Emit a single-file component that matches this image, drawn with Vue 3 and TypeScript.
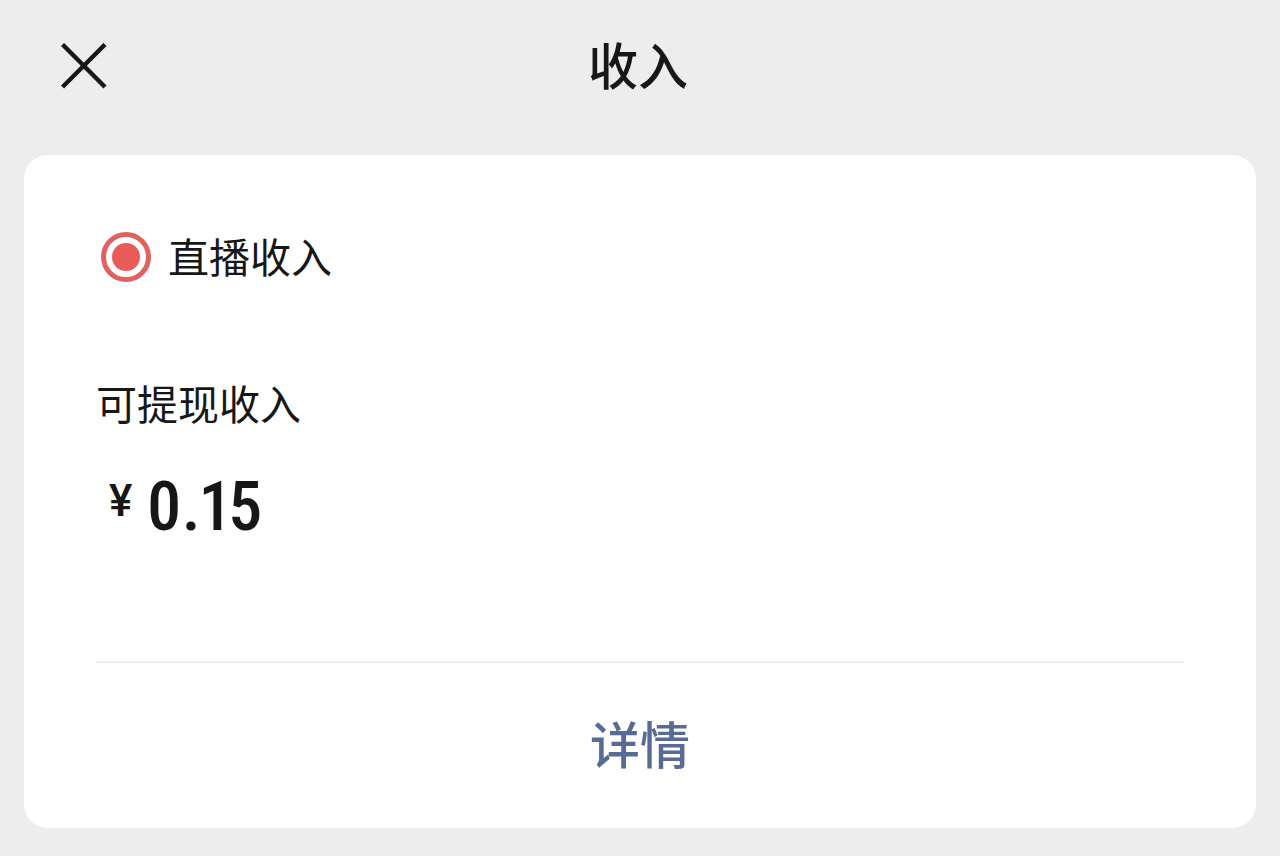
<script setup lang="ts">
const income: string = '0.15'
</script>

<template>
  <div class="page">
    <header class="bar">
      <button class="close" type="button" aria-label="关闭">
        <svg viewBox="0 0 46 46" width="46" height="46" aria-hidden="true">
          <path d="M1.5 1.5 44 44M44 1.5 1.5 44" fill="none" stroke="#171717" stroke-width="4.4" />
        </svg>
      </button>
      <h1 class="title">收入</h1>
    </header>
    <main class="card">
      <h2 class="source">
        <svg viewBox="0 0 50 50" width="50" height="50" aria-hidden="true">
          <circle cx="25" cy="25" r="22.5" fill="none" stroke="#e0625e" stroke-width="5" />
          <circle cx="25" cy="25" r="14" fill="#e95b59" />
        </svg>
        <span class="source-name">直播收入</span>
      </h2>
      <p class="label">可提现收入</p>
      <p class="amount"><span class="sign">¥</span><span>{{ income }}</span></p>
      <footer class="foot">
        <a class="detail" href="#">详情</a>
      </footer>
    </main>
  </div>
</template>

<style>
body {
  margin: 0;
  background: #ededed;
}
</style>

<style scoped>
.page {
  padding: 0 24px 28px;
  color: #171717;
  font-family: "Noto Sans CJK SC", sans-serif;
}
.bar {
  display: grid;
  grid-template-columns: 120px 1fr 124px;
  align-items: center;
  height: 132px;
  margin-bottom: 23px;
}
.close {
  display: flex;
  justify-self: start;
  margin-left: 37px;
  padding: 0;
  border: 0;
  background: none;
  cursor: pointer;
}
.title {
  margin: 0;
  padding-bottom: 6px;
  text-align: center;
  font-size: 50px;
  line-height: 72px;
  font-weight: 500;
}
.card {
  padding: 72px 72px 0;
  border-radius: 24px;
  background: #fff;
}
.source {
  display: flex;
  align-items: center;
  gap: 17px;
  height: 60px;
  margin: 0;
  padding-left: 5px;
  font-size: 41px;
  line-height: 60px;
  font-weight: 400;
}
.source-name {
  padding-bottom: 4px;
}
.label {
  margin: 85px 0 0;
  font-size: 41px;
  line-height: 60px;
}
.amount {
  display: flex;
  align-items: flex-start;
  gap: 14px;
  margin: 27px 0 0;
  padding-left: 13px;
  font-family: "Roboto Condensed", Roboto, sans-serif;
  font-size: 68px;
  line-height: 96px;
  font-weight: 500;
  font-variant-numeric: proportional-nums;
}
.sign {
  font-family: Roboto, sans-serif;
  font-size: 44px;
  line-height: 84px;
}
.foot {
  margin-top: 106px;
  border-top: 2px solid #ededed;
  text-align: center;
}
.detail {
  display: block;
  padding: 43px 0 50px;
  color: #576b95;
  font-size: 50px;
  line-height: 72px;
  font-weight: 500;
  text-decoration: none;
}
</style>
